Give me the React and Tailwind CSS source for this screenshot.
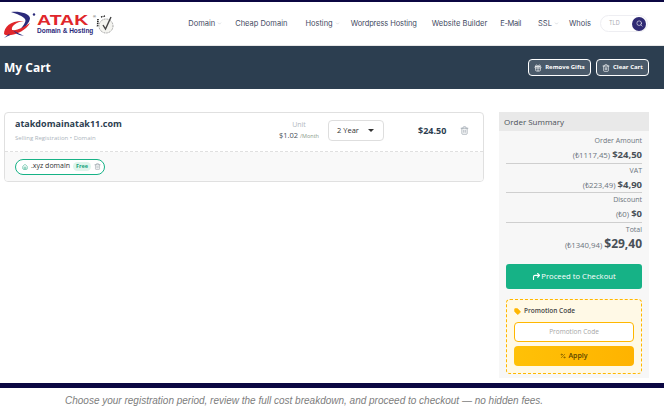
import React from "react";
import { ChevronDown, Search, Gift, Trash2, CornerUpRight, Tag, Percent, Home } from "lucide-react";

const open = "font-['Open_Sans',sans-serif]";
const nav = "font-['Inter',sans-serif]";

function NavItem({ label, caret, className = "" }) {
  return (
    <span className={`flex items-center gap-[2px] whitespace-nowrap text-[7.5px] text-[#3f4a5f] ${className}`}>
      {label}
      {caret && <ChevronDown size={5} className="text-[#b0b5bd]" />}
    </span>
  );
}

function Logo() {
  return (
    <div className="flex items-center">
      <svg width="32" height="28" viewBox="0 0 32 28" className="mt-[2px]">
        <path d="M7 1 C15 0 25 2 26 7 C26 12 20 17 14 21 C18 16 23 11 21 8 C19 5 13 3 7 1 Z" fill="#2b2a7a" />
        <path d="M0 23 C0 15 8 9 20 10 C12 11 7 15 8 19 C13 20 20 16 26 12 C22 19 14 23 7 24 C4 24.5 1 24.5 0 23 Z" fill="#e0262b" />
        <path d="M9 19 C13 22 17 23 20 25 C15 24 12 23 9 19 Z" fill="#2b2a7a" />
        <path d="M0 27 L5 23 L6 24 Z" fill="#2b2a7a" />
        <circle cx="30" cy="3.5" r="1.2" fill="#2b2a7a" />
      </svg>
      <div className="ml-[1px] flex w-[59px] flex-col font-['Liberation_Sans',sans-serif]">
        <span className="relative h-[12px] text-[15px] font-bold leading-[12px] text-[#e0262b]">
          <span className="inline-block origin-left scale-x-[1.3]">ATAK</span>
          <sup className="absolute left-[56px] top-[1px] text-[4px] leading-none text-[#555]">®</sup>
        </span>
        <span className="mt-[1px] whitespace-nowrap text-[6.5px] font-bold leading-[7px] text-[#2b2a7a]">Domain &amp; Hosting</span>
      </div>
      <svg width="18" height="20" viewBox="0 0 18 20" className="mt-[2px]">
        <circle cx="10" cy="11" r="7" fill="#f4f4f0" stroke="#8a8a8a" strokeWidth="0.9" strokeDasharray="1 0.7" />
        <path d="M7 10 L9.5 14 L15 2" fill="none" stroke="#444" strokeWidth="1.4" />
        <path d="M2 4 L1.5 12" stroke="#222" strokeWidth="1.6" strokeDasharray="1.2 0.7" />
        <path d="M5 2 L9 1" stroke="#222" strokeWidth="1.4" strokeDasharray="1 0.6" />
      </svg>
    </div>
  );
}

function Row({ label, tl, usd, big, border = true }) {
  return (
    <div className={`flex h-[29.5px] shrink-0 flex-col items-end ${border ? "border-b border-[#cfcfcf]" : ""}`}>
      <span className="h-[13px] text-[7px] leading-[13px] text-[#6c757d]">{label}</span>
      <span className="flex h-[15px] items-baseline gap-[2px] leading-[15px] text-[#6c757d]">
        <span className="text-[7.8px] leading-[15px]">{tl}</span>
        <span className={`font-bold text-[#495057] ${big ? "text-[12px] leading-[15px]" : "text-[9.5px] leading-[15px]"}`}>{usd}</span>
      </span>
    </div>
  );
}

export default function App() {
  return (
    <div className={`flex h-[410px] w-[664px] flex-col overflow-hidden bg-white ${open}`}>
      <div className="h-[2px] shrink-0 bg-[#0b0742]" />
      <header className={`flex h-[44px] shrink-0 items-center border-b border-[#e8e8e8] pl-[4px] pr-[16px] ${nav}`}>
        <Logo />
        <nav className="ml-auto flex items-center">
          <NavItem label="Domain" caret />
          <NavItem label="Cheap Domain" className="ml-[13px]" />
          <NavItem label="Hosting" caret className="ml-[18px]" />
          <NavItem label="Wordpress Hosting" className="ml-[11px] tracking-[-0.1px]" />
          <NavItem label="Website Builder" className="ml-[15px]" />
          <NavItem label="E-Mail" className="ml-[13px] tracking-[-0.3px]" />
          <NavItem label="SSL" caret className="ml-[17px]" />
          <NavItem label="Whois" className="ml-[10px]" />
          <div className="ml-[9px] flex h-[17px] w-[48px] items-center justify-between rounded-full border border-[#eeeef2] pl-[8px] pr-[1px]">
            <span className="text-[5.5px] text-[#a9a9b3]">TLD</span>
            <span className="flex h-[14px] w-[14px] items-center justify-center rounded-full bg-[#2f2a73]">
              <Search size={7} className="text-white" />
            </span>
          </div>
        </nav>
      </header>
      <div className="flex h-[43px] shrink-0 items-center justify-between bg-[#2c3e50] pl-[4px] pr-[15px]">
        <h1 className="text-[12px] font-bold text-white">My Cart</h1>
        <div className="flex gap-[5px]">
          <button className="flex h-[17px] w-[63px] items-center justify-center gap-[3px] rounded-[4px] border border-white bg-[#4a5a6a] text-[6px] font-bold text-white">
            <Gift size={8} />Remove Gifts
          </button>
          <button className="flex h-[17px] w-[53px] items-center justify-center gap-[3px] rounded-[4px] border border-white bg-[#4a5a6a] text-[6px] font-bold text-white">
            <Trash2 size={8} />Clear Cart
          </button>
        </div>
      </div>
      <main className="flex h-[294px] shrink-0 items-start pl-[4px] pt-[23px]">
        <section className="w-[480px] overflow-hidden rounded-[4px] border border-[#e0e0e0]">
          <div className="flex h-[39px] items-start border-b border-dashed border-[#e0e0e0] pl-[10px]">
            <div className="flex w-[243px] shrink-0 flex-col">
              <span className="mt-[4px] text-[9px] font-bold leading-[14px] text-[#2c3e50]">atakdomainatak11.com</span>
              <span className="mt-[3px] text-[6px] leading-[8px] text-[#adb5bd]">Selling Registration • Domain</span>
            </div>
            <div className="ml-[3px] flex w-[58px] shrink-0 flex-col items-end pt-[4px]">
              <span className="mt-[3px] w-[40px] text-center text-[7px] leading-[10px] text-[#b3b9c0]">Unit</span>
              <span className="whitespace-nowrap text-[7.5px] leading-[11px] text-[#495057]">$1.02 <span className="text-[5.5px] text-[#8a9a8a]">/Month</span></span>
            </div>
            <div className="ml-[9px] mt-[7px] flex h-[21px] w-[56px] shrink-0 items-center justify-between rounded-[4px] border border-[#dedede] pl-[8px] pr-[9px] text-[7.5px] text-[#333]">
              2 Year
              <span className="h-0 w-0 border-x-[3px] border-t-[3px] border-x-transparent border-t-[#333]" />
            </div>
            <span className="ml-[34px] mt-[11px] text-[9px] font-bold leading-[14px] text-[#2c3e50]">$24.50</span>
            <Trash2 size={9} className="ml-[14px] mt-[13px] text-[#9aa3ab]" />
          </div>
          <div className="flex h-[29px] items-center bg-[#f9f9f9] pl-[10px]">
            <div className="flex h-[16px] items-center rounded-full border border-[#16b286] bg-white pl-[6px] pr-[3px]">
              <Home size={6} className="text-[#16a37b]" />
              <span className="ml-[3px] text-[7px] text-[#333]">.xyz domain</span>
              <span className="ml-[3px] rounded-full bg-[#dff5ec] px-[3px] text-[5.5px] font-bold leading-[9px] text-[#16a37b]">Free</span>
              <Trash2 size={7} className="ml-[3px] text-[#9aa3ab]" />
            </div>
          </div>
        </section>
        <aside className="ml-[15px] flex h-[266px] w-[150px] flex-col bg-[#f7f7f7]">
          <div className="flex h-[19px] shrink-0 items-center bg-[#e9e9e9] pl-[5px] text-[8px] text-[#495057]">Order Summary</div>
          <div className="flex flex-col px-[7px] pt-[3px]">
            <Row label="Order Amount" tl="(₺1117,45)" usd="$24,50" />
            <Row label="VAT" tl="(₺223,49)" usd="$4,90" />
            <Row label="Discount" tl="(₺0)" usd="$0" />
            <Row label="Total" tl="(₺1340,94)" usd="$29,40" big border={false} />
          </div>
          <button className="mx-[7px] mt-[12px] flex h-[25px] shrink-0 items-center justify-center rounded-[3px] bg-[#16b286] text-[7.7px] text-white">
            <CornerUpRight size={9} strokeWidth={3} />Proceed to Checkout
          </button>
          <div className="mx-[7px] mt-[10px] flex h-[75px] shrink-0 flex-col rounded-[4px] border border-dashed border-[#ffb700] bg-[#fff9e6] px-[7px]">
            <div className="flex h-[22px] shrink-0 items-center gap-[3px] text-[6.5px] font-semibold text-[#444]">
              <Tag size={7} className="fill-[#ffb700] text-[#ffb700]" />Promotion Code
            </div>
            <div className="flex h-[20px] shrink-0 items-center justify-center rounded-[4px] border border-[#ffb700] bg-white text-[6.5px] text-[#a5a5a5]">Promotion Code</div>
            <button className="mt-[4px] flex h-[20px] shrink-0 items-center justify-center gap-[2px] rounded-[4px] bg-gradient-to-r from-[#ffc107] to-[#ffb300] text-[7px] font-semibold text-[#5a4300]">
              <Percent size={6} />Apply
            </button>
          </div>
        </aside>
      </main>
      <div className="h-[5px] shrink-0 bg-[#0b0742]" />
      <p className="mt-[5px] pl-[65px] font-['Liberation_Sans',sans-serif] text-[10px] italic text-[#7d7d7d]">Choose your registration period, review the full cost breakdown, and proceed to checkout — no hidden fees.</p>
    </div>
  );
}
